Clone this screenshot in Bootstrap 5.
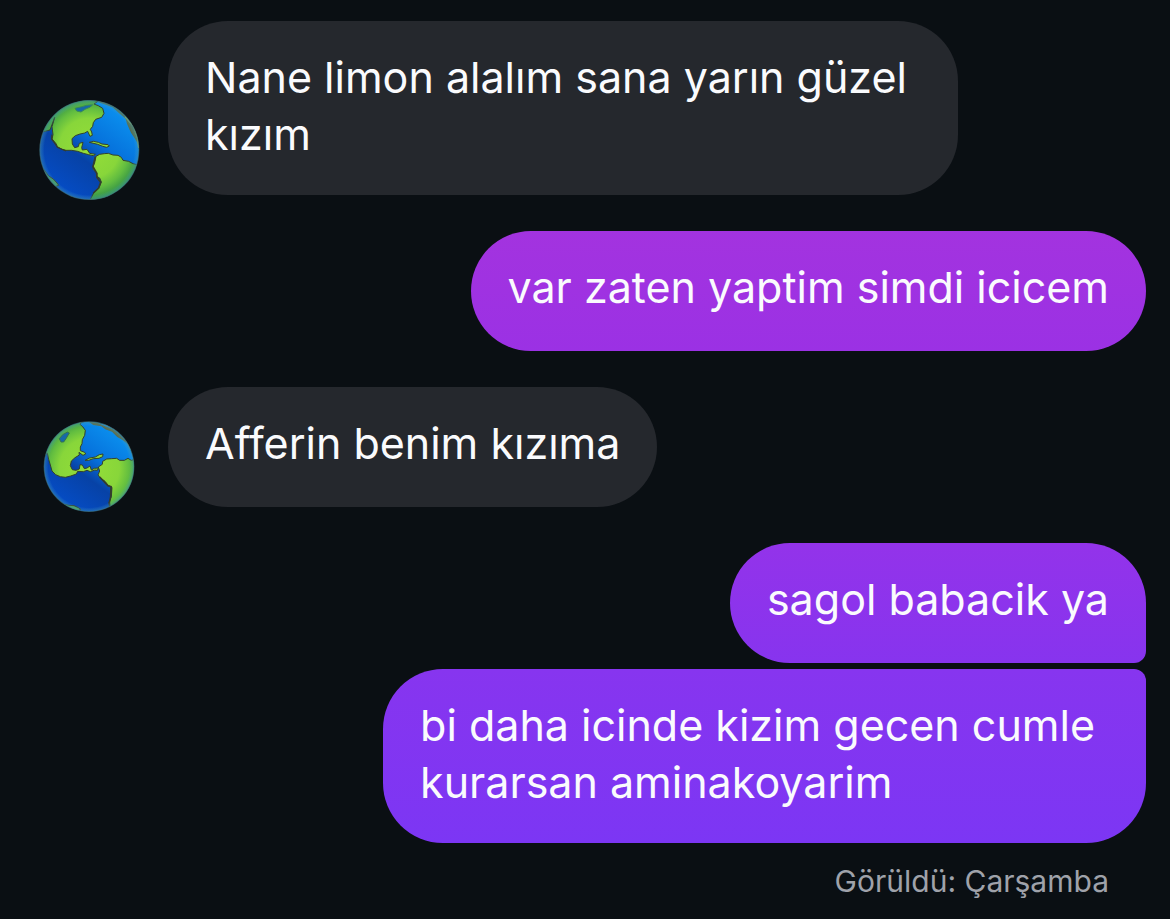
<!DOCTYPE html>
<html lang="tr">
<head>
<meta charset="utf-8">
<meta name="viewport" content="width=device-width, initial-scale=1">
<title>Sohbet</title>
<link href="https://cdn.jsdelivr.net/npm/bootstrap@5.3.0/dist/css/bootstrap.min.css" rel="stylesheet">
<style>
  body { background: #0a0f13; color: #fafbfd; font-family: Inter, "Liberation Sans", sans-serif; }
  .thread { padding: 21px 24px 16px 38px; gap: 36px; }
  .incoming { gap: 28px; }
  .outgoing { gap: 6px; }
  .bubble { min-height: 120px; padding: 28px 37px 32px; border-radius: 60px; font-size: 43px; line-height: 57px; background: #25282d; }
  .wrapped { padding-right: 51px; }
  .avatar { width: 102px; height: 102px; margin-bottom: -6px; }
  .tone-a { background: linear-gradient(#a333df, #9b31e4); }
  .tone-b { background: linear-gradient(#9333ea, #8734ee); }
  .tone-c { background: linear-gradient(#8735ef, #7c36f4); }
  .joined-below { border-bottom-right-radius: 12px; }
  .joined-above { border-top-right-radius: 12px; }
  .seen { margin: 14px 37px 0 0; font-size: 30px; line-height: 36px; color: #9fa2aa; }
</style>
</head>
<body>
<main class="thread d-flex flex-column">
  <div class="incoming d-flex align-items-end">
    <svg class="avatar flex-shrink-0" viewBox="24 27 306 306" role="img" aria-label="Dünya">
      <defs>
        <linearGradient id="sea" x1=".85" y1=".2" x2=".3" y2=".95"><stop offset="0" stop-color="#0a8cec"/><stop offset=".35" stop-color="#0672dc"/><stop offset=".6" stop-color="#0742a6"/><stop offset="1" stop-color="#054cc4"/></linearGradient>
        <radialGradient id="land" gradientUnits="userSpaceOnUse" cx="178" cy="175" r="150"><stop offset="0" stop-color="#95de38"/><stop offset=".6" stop-color="#88d63a"/><stop offset=".8" stop-color="#62bd40"/><stop offset="1" stop-color="#359347"/></radialGradient>
        <radialGradient id="rim"><stop offset=".9" stop-color="#4caed0" stop-opacity="0"/><stop offset=".97" stop-color="#479bab" stop-opacity=".35"/><stop offset="1" stop-color="#37606a" stop-opacity=".9"/></radialGradient>
        <clipPath id="disc1"><circle cx="178" cy="180" r="149"/></clipPath>
        <clipPath id="disc2"><circle cx="177" cy="170" r="135"/></clipPath>
      </defs>
      <g clip-path="url(#disc1)">
        <circle cx="178" cy="180" r="149" fill="url(#sea)"/>
        <g fill="url(#land)" stroke="#35432b" stroke-width="3" stroke-linejoin="round">
          <path d="M60 120 74 82 66 110 69 134 66 147 78 161 82 170 96 178 108 181 125 181 143 184 160 190 176 194 190 197 196 193 179 190 171 178 157 180 155 173 159 157 148 160 145 170 134 173 127 162 126 146 136 137 150 132 164 129 173 124 180 139 187 136 185 126 181 118 188 109 190 98 197 88 215 82 222 70 218 55 205 47 192 42 204 34 120 20 60 60 20 130Z"/>
          <path d="M178 157 190 154 205 157 216 162 234 164 238 168 230 172 218 169 203 163Z"/>
          <path d="M198 199 209 193 223 191 235 190 249 195 264 196 274 202 279 211 296 214 309 221 325 225 300 330 180 330 191 309 207 292 214 276 209 264 200 259 201 249 190 239 189 229 194 218Z"/>
          <path d="M42 239 56 258 70 267 81 279 86 286 72 291 40 260Z" fill="#46985c"/>
        </g>
        <path d="M135 55 155 50 170 46 188 44 181 51 165 58 153 66 140 63Z" fill="#1769a7" stroke="#398956" stroke-width="3"/>
        <path d="M203 36 224 43 248 52 267 69 287 86 291 101 303 128 315 146 324 162 340 150 300 60 230 20Z" fill="#566a49"/>
        <path d="M285 80 311 110 323 145 326 174" fill="none" stroke="#9aae50" stroke-width="4"/>
        <path d="M196 200 189 230 200 249 201 262 212 277 206 294 190 309" fill="none" stroke="#343d2d" stroke-width="5"/>
        <path d="M66 134 65 147 77 163 82 172 108 183" fill="none" stroke="#343d2d" stroke-width="4"/>
      </g>
      <circle cx="178" cy="180" r="150" fill="url(#rim)"/>
    </svg>
    <div class="bubble wrapped">Nane limon alalım sana yarın güzel<br>kızım</div>
  </div>

  <div class="outgoing d-flex flex-column align-items-end">
    <div class="bubble tone-a">var zaten yaptim simdi icicem</div>
  </div>

  <div class="incoming d-flex align-items-end">
    <svg class="avatar flex-shrink-0" viewBox="24 3 306 306" role="img" aria-label="Dünya">
      <g clip-path="url(#disc2)">
        <circle cx="177" cy="170" r="135" fill="url(#sea)"/>
        <g fill="url(#land)" stroke="#35432b" stroke-width="3" stroke-linejoin="round">
          <path d="M25 150 52 130 56 148 61 165 66 183 77 194 91 200 106 202 122 198 139 192 143 184 160 185 171 181 181 185 194 180 202 181 205 174 193 175 184 180 180 168 171 174 163 176 157 165 150 164 148 177 138 181 127 179 121 167 124 153 135 143 148 135 147 127 159 136 167 132 164 127 151 122 151 111 156 101 157 89 164 76 166 61 158 50 150 43 160 30 110 20 40 75Z"/>
          <path d="M165 151 179 144 196 141 208 134 219 132 218 140 207 145 190 146 176 151Z"/>
          <path d="M205 171 217 163 218 154 230 147 245 146 260 145 269 151 283 151 294 145 304 151 324 145 310 250 241 304 237 278 244 260 246 232 234 226 225 214 212 205 204 195 209 183Z"/>
          <path d="M103 283 116 286 132 287 145 293 152 298 135 307 98 293Z" fill="#4ba05b"/>
        </g>
        <path d="M93 96 88 86 98 74 112 66 118 69 108 86 101 96Z" fill="#1769a7" stroke="#36754c" stroke-width="3"/>
        <path d="M177 36 200 37 224 48 247 56 267 71 283 88 292 101 279 91 262 81 246 65 226 58 214 49 190 45Z" fill="#5d6744"/>
        <path d="M218 40 246 51 272 69 290 92 303 119" fill="none" stroke="#8fa386" stroke-width="4"/>
        <path d="M209 201 234 227 243 230 242 260 238 278 240 294" fill="none" stroke="#343d2d" stroke-width="5"/>
      </g>
      <circle cx="177" cy="170" r="136" fill="url(#rim)"/>
    </svg>
    <div class="bubble">Afferin benim kızıma</div>
  </div>

  <div class="outgoing d-flex flex-column align-items-end">
    <div class="bubble tone-b joined-below">sagol babacik ya</div>
    <div class="bubble wrapped tone-c joined-above">bi daha icinde kizim gecen cumle<br>kurarsan aminakoyarim</div>
    <p class="seen">Görüldü: Çarşamba</p>
  </div>
</main>
<script src="https://cdn.jsdelivr.net/npm/bootstrap@5.3.0/dist/js/bootstrap.bundle.min.js"></script>
</body>
</html>
